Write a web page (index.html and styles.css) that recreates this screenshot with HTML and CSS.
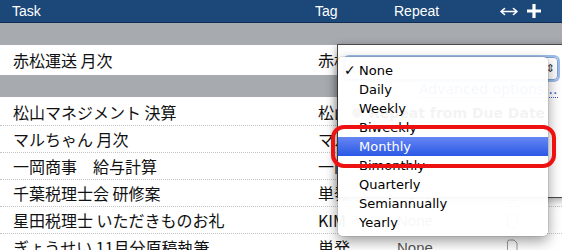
FILE: index.html
```html
<!DOCTYPE html>
<html>
<head>
<meta charset="utf-8">
<link rel="stylesheet" href="styles.css">
</head>
<body>
<div class="app">
  <div class="bar">
    <span class="h-task">Task</span>
    <span class="h-tag">Tag</span>
    <span class="h-repeat">Repeat</span>
    <span class="h-icons">
      <svg class="ic-resize" width="18" height="9" viewBox="0 0 18 9"><path d="M1 4.5H17M1 4.5L4.5 1.5M1 4.5L4.5 7.5M17 4.5L13.5 1.5M17 4.5L13.5 7.5" stroke="#fff" stroke-width="1.6" fill="none" stroke-linecap="round"/></svg>
      <svg class="ic-plus" width="16" height="16" viewBox="0 0 16 16"><path d="M8 1V15M1 8H15" stroke="#fff" stroke-width="3.2" fill="none"/></svg>
    </span>
  </div>
  <div class="group"></div>
  <div class="row row-sel">
    <span class="c-task">赤松運送 月次</span>
    <span class="c-tag">赤松運送</span>
    <span class="c-rep"></span>
  </div>
  <div class="group group-2"></div>
  <div class="list">
    <div class="row"><span class="c-task">松山マネジメント 決算</span><span class="c-tag">松山</span><span class="c-rep">None</span></div>
    <div class="row"><span class="c-task">マルちゃん 月次</span><span class="c-tag">マルちゃん</span><span class="c-rep">None</span></div>
    <div class="row"><span class="c-task">一岡商事　給与計算</span><span class="c-tag">一岡商事</span><span class="c-rep">None</span></div>
    <div class="row"><span class="c-task">千葉税理士会 研修案</span><span class="c-tag">単発</span><span class="c-rep">None</span><span class="c-note"><svg width="12" height="16" viewBox="0 0 12 16"><path d="M1.5 3Q1.5 1 3.5 1H8L11 4V13.5Q11 15.5 9 15.5H3.5Q1.5 15.5 1.5 13.5Z" stroke="#9a9a9a" stroke-width="1" fill="none"/></svg></span></div>
    <div class="row"><span class="c-task">星田税理士 いただきものお礼</span><span class="c-tag">KIM</span><span class="c-rep">None</span><span class="c-note"><svg width="12" height="16" viewBox="0 0 12 16"><path d="M1.5 3Q1.5 1 3.5 1H8L11 4V13.5Q11 15.5 9 15.5H3.5Q1.5 15.5 1.5 13.5Z" stroke="#9a9a9a" stroke-width="1" fill="none"/></svg></span></div>
    <div class="row"><span class="c-task">ぎょうせい 11月分原稿執筆</span><span class="c-tag">単発</span><span class="c-rep">None</span><span class="c-note"><svg width="12" height="16" viewBox="0 0 12 16"><path d="M1.5 3Q1.5 1 3.5 1H8L11 4V13.5Q11 15.5 9 15.5H3.5Q1.5 15.5 1.5 13.5Z" stroke="#9a9a9a" stroke-width="1" fill="none"/></svg></span></div>
  </div>

  <div class="popover">
    <div class="pop-select"><span class="pop-arrows">&#8661;</span></div>
    <div class="pop-adv">Advanced options...</div>
    <div class="pop-radio"><span class="radio"></span>Repeat from Due Date</div>
  </div>

  <ul class="menu">
    <li class="mi"><span class="chk">&#10003;</span>None</li>
    <li class="mi">Daily</li>
    <li class="mi">Weekly</li>
    <li class="mi">Biweekly</li>
    <li class="mi mi-hi">Monthly</li>
    <li class="mi">Bimonthly</li>
    <li class="mi">Quarterly</li>
    <li class="mi">Semiannually</li>
    <li class="mi">Yearly</li>
  </ul>

  <div class="ring"></div>
</div>
</body>
</html>
```

FILE: styles.css
```css
html, body {
  margin: 0;
  padding: 0;
  background: #fff;
}
.app {
  position: relative;
  width: 562px;
  height: 250px;
  overflow: hidden;
  font-family: "Noto Sans CJK JP", "Liberation Sans", sans-serif;
  color: #111;
}
.bar {
  height: 22px;
  background: #1c4779;
  border-bottom: 1px solid #0f2d52;
  display: grid;
  grid-template-columns: 315px 79px 1fr auto;
  align-items: center;
  font-family: "Liberation Sans", Arial, sans-serif;
  font-size: 14px;
  color: #fff;
}
.h-task { padding-left: 12px; }
.h-icons {
  display: flex;
  align-items: center;
  gap: 8px;
  padding-right: 20px;
}
.ic-resize { margin-top: 1px; }
.group {
  height: 22px;
  background: #a7aaaf;
}
.group-2 { height: 22px; }
.row {
  display: grid;
  grid-template-columns: 318px 78px 110px 1fr;
  align-items: center;
  height: 26px;
  border-bottom: 1px dotted #c4c4c4;
  font-size: 16px;
  line-height: 1;
  white-space: nowrap;
  overflow: hidden;
}
.row-sel {
  height: 30px;
  border-bottom: none;
}
.list { padding-top: 2px; }
.c-task { padding-left: 13px; }
.c-tag { overflow: hidden; }
.c-rep {
  padding-left: 1px;
  font-family: "Liberation Sans", Arial, sans-serif;
  font-size: 15px;
  color: #555;
}
.c-note { display: flex; }

.popover {
  position: absolute;
  left: 337px;
  top: 44px;
  width: 240px;
  height: 152px;
  background: #fff;
  border: 1px solid #4a4a4a;
  box-shadow: 0 2px 8px rgba(0,0,0,0.35);
  font-family: "DejaVu Sans", sans-serif;
  font-size: 13px;
}
.pop-select {
  margin: 12px 0 0 7px;
  width: 211px;
  height: 21px;
  border: 1px solid #7fa2d8;
  border-radius: 4px;
  box-shadow: 0 0 0 2px #9ebde9;
  display: flex;
  justify-content: flex-end;
  align-items: center;
}
.pop-arrows {
  font-size: 11px;
  color: #333;
  padding-right: 2px;
}
.pop-adv {
  margin: 2px 0 0 81px;
  color: #3d5fc8;
  border-bottom: 1px dotted #3d5fc8;
  width: 139px;
  white-space: nowrap;
  overflow: hidden;
  line-height: 15px;
  font-size: 14px;
}
.pop-radio {
  margin: 7px 0 0 14px;
  display: flex;
  align-items: center;
  gap: 7px;
  font-weight: bold;
  font-size: 14px;
  color: #222;
}
.radio {
  width: 10px;
  height: 10px;
  border-radius: 50%;
  background: #555;
}

.menu {
  position: absolute;
  left: 338px;
  top: 57px;
  width: 210px;
  margin: 0;
  padding: 4px 0 4px;
  list-style: none;
  background: rgba(255,255,255,0.95);
  border-radius: 5px;
  box-shadow: 0 5px 14px rgba(0,0,0,0.4), 0 0 0 1px rgba(0,0,0,0.08);
  font-family: "DejaVu Sans", sans-serif;
  font-size: 13px;
  color: #000;
}
.mi {
  position: relative;
  height: 19px;
  line-height: 19px;
  padding-left: 21px;
}
.chk {
  position: absolute;
  left: 6px;
  top: 0;
  font-size: 14px;
}
.mi-hi {
  background: linear-gradient(#6686f3, #2a58e6);
  color: #fff;
}
.ring {
  position: absolute;
  left: 331px;
  top: 125px;
  width: 217px;
  height: 35px;
  border: 4px solid #ee1111;
  border-radius: 13px;
}
```
